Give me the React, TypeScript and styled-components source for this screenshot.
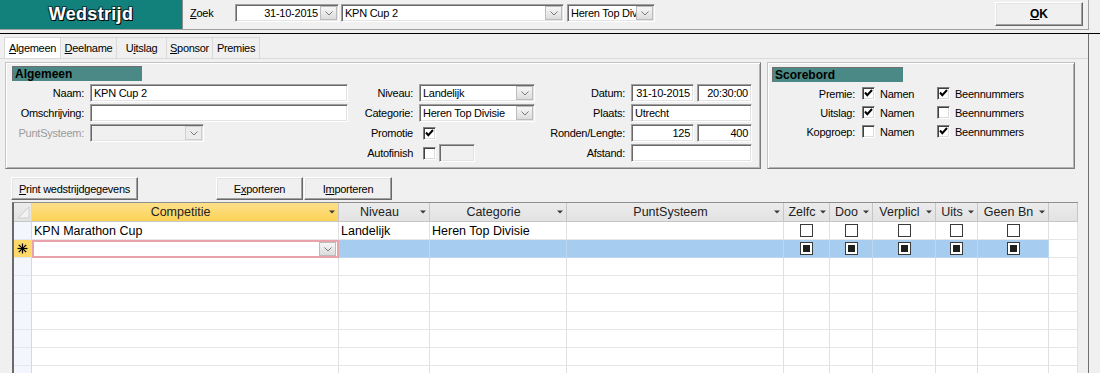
import React from 'react';
import styled, { createGlobalStyle, css } from 'styled-components';

const GlobalStyle = createGlobalStyle`
  html, body { margin: 0; padding: 0; background: #f0f0f0; }
  body {
    font-family: 'Liberation Sans', Arial, sans-serif;
    font-size: 11px;
    letter-spacing: -0.25px;
    color: #000;
    overflow: hidden;
  }
  * { box-sizing: border-box; }
`;

const sunken = css`
  border: 1px solid;
  border-color: #a0a0a0 #ffffff #ffffff #a0a0a0;
  box-shadow: inset 1px 1px 0 #696969, inset -1px -1px 0 #e3e3e3;
`;

const raised = css`
  border: 1px solid;
  border-color: #ffffff #696969 #696969 #ffffff;
  box-shadow: inset -1px -1px 0 #a0a0a0, inset 1px 1px 0 #e3e3e3;
  background: #f0f0f0;
`;

const Screen = styled.div`
  width: 1100px;
  height: 373px;
  overflow: hidden;
  display: flex;
  flex-direction: column;
`;

/* ---------- top bar ---------- */
const TopBar = styled.header`
  display: flex;
  align-items: flex-start;
  width: 1089px;
  height: 30px;
  flex-shrink: 0;
  border-right: 1px solid #a0a0a0;
  border-bottom: 1px solid #a0a0a0;
`;

const TitleBox = styled.div`
  width: 183px;
  height: 29px;
  background: #12807b;
  border-right: 1px solid #8c8c8c;
  display: flex;
  align-items: center;
  justify-content: center;
  color: #fff;
  font-size: 18px;
  font-weight: bold;
  letter-spacing: 0.3px;
  text-shadow: 1px 1px 0 #000, -1px -1px 0 #0b3f3c, 1px -1px 0 #0b3f3c, -1px 1px 0 #0b3f3c;
`;

const SearchGroup = styled.div`
  display: flex;
  align-items: center;
  height: 18px;
  margin-top: 4px;
  margin-left: 7px;
`;

const SearchLabel = styled.span`
  width: 45px;
`;

const Combo = styled.div<{ $w: number; $disabled?: boolean; $ml?: number }>`
  ${sunken};
  width: ${p => p.$w}px;
  height: 18px;
  margin-left: ${p => p.$ml ?? 0}px;
  flex-shrink: 0;
  display: flex;
  align-items: center;
  background: ${p => (p.$disabled ? '#f0f0f0' : '#fff')};
  overflow: hidden;
`;

const ComboText = styled.span<{ $align?: string }>`
  flex: 1;
  min-width: 0;
  padding: 0 2px 0 3px;
  white-space: nowrap;
  overflow: hidden;
  text-align: ${p => p.$align ?? 'left'};
`;

const DropBtn = styled.span<{ $disabled?: boolean }>`
  width: 17px;
  height: 14px;
  margin-right: 1px;
  flex-shrink: 0;
  border: 1px solid ${p => (p.$disabled ? '#d0d0d0' : '#bcbcbc')};
  background: ${p => (p.$disabled ? '#ececec' : 'linear-gradient(#f6f6f6, #dcdcdc)')};
  display: flex;
  align-items: center;
  justify-content: center;
`;

const OkButton = styled.button`
  ${raised};
  margin-left: auto;
  margin-right: 5px;
  margin-top: 2px;
  width: 88px;
  height: 24px;
  font-family: inherit;
  font-size: 12px;
  font-weight: bold;
  padding: 0;
  color: #000;
`;

const Divider = styled.div`
  width: 1100px;
  margin-top: 3px;
  border-top: 1px solid #000;
  flex-shrink: 0;
`;

/* ---------- tab page ---------- */
const Page = styled.main`
  flex: 1;
  width: 1089px;
  border-right: 1px solid #6f6f6f;
  display: flex;
  flex-direction: column;
  min-height: 0;
`;

const TabStrip = styled.nav`
  display: flex;
  margin-top: 3px;
  height: 22px;
  padding-left: 4px;
  border-bottom: 1px solid #d9d9d9;
  flex-shrink: 0;
`;

const Tab = styled.div<{ $w: number; $active?: boolean }>`
  width: ${p => p.$w}px;
  height: 21px;
  margin-right: -1px;
  border: 1px solid #d9d9d9;
  border-bottom: none;
  background: ${p => (p.$active ? '#ffffff' : '#f0f0f0')};
  display: flex;
  align-items: center;
  justify-content: center;
  font-size: 11px;
  letter-spacing: -0.3px;
  white-space: nowrap;
`;

const Content = styled.section`
  flex: 1;
  display: flex;
  flex-direction: column;
  padding: 3px 0 0 5px;
  min-height: 0;
`;

const PanelsRow = styled.div`
  display: flex;
  gap: 6px;
  flex-shrink: 0;
`;

const Panel = styled.div<{ $w: number; $pad: string }>`
  width: ${p => p.$w}px;
  height: 107px;
  padding: ${p => p.$pad};
  border: 1px solid;
  border-color: #c4c4c4 #7c7c7c #7c7c7c #c4c4c4;
  box-shadow: inset 1px 1px 0 #fff, inset -1px -1px 0 #b4b4b4;
`;

const SectionHeading = styled.div<{ $w: number }>`
  width: ${p => p.$w}px;
  height: 15px;
  line-height: 15px;
  padding-left: 2px;
  background: #4b8986;
  border-top: 1px solid #6f6f6f;
  border-left: 1px solid #6f6f6f;
  font-size: 12px;
  font-weight: bold;
  letter-spacing: 0;
  color: #000;
`;

const Fields = styled.div`
  display: flex;
  margin-top: 3px;
`;

const Column = styled.div<{ $ml?: number }>`
  display: flex;
  flex-direction: column;
  gap: 2px;
  margin-left: ${p => p.$ml ?? 0}px;
`;

const FieldRow = styled.div`
  display: flex;
  align-items: center;
  height: 18px;
  gap: 6px;
`;

const Label = styled.span<{ $w: number; $muted?: boolean }>`
  width: ${p => p.$w}px;
  flex-shrink: 0;
  text-align: right;
  white-space: nowrap;
  color: ${p => (p.$muted ? '#9a9a9a' : '#000')};
`;

const TextBox = styled.div<{ $w: number; $align?: string; $disabled?: boolean; $ml?: number }>`
  ${sunken};
  width: ${p => p.$w}px;
  height: 18px;
  flex-shrink: 0;
  margin-left: ${p => p.$ml ?? 0}px;
  background: ${p => (p.$disabled ? '#f0f0f0' : '#fff')};
  padding: 0 3px;
  line-height: 16px;
  text-align: ${p => p.$align ?? 'left'};
  white-space: nowrap;
  overflow: hidden;
`;

const InputPair = styled.div`
  display: flex;
  gap: 3px;
`;

const CheckBoxBox = styled.span<{ $ml?: number }>`
  width: 13px;
  height: 13px;
  flex-shrink: 0;
  margin-left: ${p => p.$ml ?? 0}px;
  border: 1px solid;
  border-color: #808080 #ffffff #ffffff #808080;
  box-shadow: inset 1px 1px 0 #404040, inset -1px -1px 0 #dcdcdc;
  background: #fff;
  display: flex;
  align-items: center;
  justify-content: center;
`;

const ScoreRows = styled.div`
  display: flex;
  flex-direction: column;
  margin-top: 2px;
`;

const ScoreRow = styled.div`
  display: flex;
  align-items: center;
  height: 19px;
`;

const CheckItem = styled.span<{ $w?: number; $ml?: number }>`
  display: flex;
  align-items: center;
  gap: 5px;
  width: ${p => (p.$w ? `${p.$w}px` : 'auto')};
  margin-left: ${p => p.$ml ?? 0}px;
  white-space: nowrap;
`;

/* ---------- buttons ---------- */
const ButtonRow = styled.div`
  display: flex;
  margin-top: 8px;
  flex-shrink: 0;
`;

const ActionButton = styled.button<{ $w: number; $ml: number }>`
  ${raised};
  width: ${p => p.$w}px;
  height: 23px;
  margin-left: ${p => p.$ml}px;
  font-family: inherit;
  font-size: 11px;
  letter-spacing: -0.25px;
  color: #000;
  padding: 0;
  white-space: nowrap;
`;

/* ---------- datasheet ---------- */
const COLS = '18px 307px 91px 137px 217px 46px 43px 63px 42px 71px 1fr';

const Sheet = styled.div`
  margin-top: 2px;
  margin-left: 7px;
  width: 1066px;
  flex: 1;
  min-height: 0;
  overflow: hidden;
  background: #fff;
  border-top: 1px solid #8e8e8e;
  border-left: 2px solid #6a6a6a;
  font-size: 12.5px;
  letter-spacing: 0;
`;

const SheetRow = styled.div<{ $h: number }>`
  display: grid;
  grid-template-columns: ${COLS};
  height: ${p => p.$h}px;
`;

const HeadCell = styled.div<{ $active?: boolean }>`
  border-right: 1px solid #c6c6c6;
  border-bottom: 1px solid #c6c6c6;
  background: ${p => (p.$active ? 'linear-gradient(#fee08a, #fbd257)' : 'linear-gradient(#ececec, #e2e2e2)')};
  display: flex;
  align-items: center;
  padding: 0 3px 0 3px;
  overflow: hidden;
  color: #222;
`;

const HeadText = styled.span`
  flex: 1;
  min-width: 0;
  text-align: center;
  white-space: nowrap;
  overflow: hidden;
`;

const HeadArrow = styled.span`
  width: 9px;
  flex-shrink: 0;
  display: flex;
  justify-content: flex-end;
`;

const SelectorCell = styled.div<{ $tone: 'head' | 'new' | 'plain' }>`
  border-right: 1px solid #d2d8e4;
  border-bottom: 1px solid ${p => (p.$tone === 'head' ? '#c6c6c6' : '#e3e7ef')};
  background: ${p =>
    p.$tone === 'head' ? 'linear-gradient(#ececec, #e2e2e2)' : p.$tone === 'new' ? '#fcd96a' : '#f3f6fc'};
  display: flex;
  align-items: center;
  justify-content: center;
`;

const DataCell = styled.div<{ $tone?: 'plain' | 'sel'; $center?: boolean }>`
  border-right: 1px solid ${p => (p.$tone === 'sel' ? '#bcd8f1' : '#e0e0e0')};
  border-bottom: 1px solid ${p => (p.$tone === 'sel' ? '#bcd8f1' : '#e6e6e6')};
  background: ${p => (p.$tone === 'sel' ? '#a6cdf0' : '#fff')};
  display: flex;
  align-items: center;
  justify-content: ${p => (p.$center ? 'center' : 'flex-start')};
  padding: 0 2px;
  white-space: nowrap;
  overflow: hidden;
`;

const EditCell = styled.div`
  border: 2px solid #e9a3aa;
  background: #fff;
  display: flex;
  align-items: center;
  justify-content: flex-end;
  padding-right: 0;
`;

const GridCheck = styled.span`
  width: 13px;
  height: 13px;
  border: 1px solid #3a3a3a;
  background: #fff;
  display: flex;
  align-items: center;
  justify-content: center;
`;

const NullMark = styled.span`
  width: 7px;
  height: 7px;
  background: #1e1e1e;
`;

/* ---------- icons ---------- */
const Chevron = () => (
  <svg width="8" height="5" viewBox="0 0 8 5">
    <polyline points="0.5,0.5 4,4 7.5,0.5" fill="none" stroke="#7a7a7a" strokeWidth="1" />
  </svg>
);

const Tick = () => (
  <svg width="9" height="9" viewBox="0 0 9 9">
    <path d="M1 3.5 L3.3 6.2 L8 1" fill="none" stroke="#000" strokeWidth="2" />
  </svg>
);

const SortArrow = () => (
  <svg width="6" height="4" viewBox="0 0 6 4">
    <polygon points="0,0.5 6,0.5 3,3.5" fill="#3a3a3a" />
  </svg>
);

const CornerMark = () => (
  <svg width="14" height="14" viewBox="0 0 14 14">
    <polygon points="13,2 13,13 2,13" fill="#f2f2f2" stroke="#cfcfcf" strokeWidth="1" />
  </svg>
);

const NewRowStar = () => (
  <svg width="11" height="11" viewBox="0 0 11 11">
    <g stroke="#000" strokeWidth="1.2">
      <line x1="5.5" y1="0.5" x2="5.5" y2="10.5" />
      <line x1="0.5" y1="5.5" x2="10.5" y2="5.5" />
      <line x1="1.8" y1="1.8" x2="9.2" y2="9.2" />
      <line x1="9.2" y1="1.8" x2="1.8" y2="9.2" />
    </g>
  </svg>
);

const CheckBox = ({ checked, ml }: { checked?: boolean; ml?: number }) => (
  <CheckBoxBox $ml={ml}>{checked ? <Tick /> : null}</CheckBoxBox>
);

const ComboBox = ({
  w,
  text,
  align,
  disabled,
  ml,
}: {
  w: number;
  text: string;
  align?: string;
  disabled?: boolean;
  ml?: number;
}) => (
  <Combo $w={w} $disabled={disabled} $ml={ml}>
    <ComboText $align={align}>{text}</ComboText>
    <DropBtn $disabled={disabled}>
      <Chevron />
    </DropBtn>
  </Combo>
);

/* ---------- data ---------- */
const headers = [
  { t: 'Competitie', active: true },
  { t: 'Niveau' },
  { t: 'Categorie' },
  { t: 'PuntSysteem' },
  { t: 'Zelfc' },
  { t: 'Doo' },
  { t: 'Verplicl' },
  { t: 'Uits' },
  { t: 'Geen Bn' },
];

const scoreRows = [
  { label: 'Premie:', namen: true, been: true },
  { label: 'Uitslag:', namen: true, been: false },
  { label: 'Kopgroep:', namen: false, been: true },
];

const tabs = [
  { label: <><u>A</u>lgemeen</>, w: 57, active: true },
  { label: <><u>D</u>eelname</>, w: 57 },
  { label: <>U<u>i</u>tslag</>, w: 51 },
  { label: <><u>S</u>ponsor</>, w: 47 },
  { label: <>Premies</>, w: 48 },
];

export default function App() {
  const emptyRows = Array.from({ length: 7 });
  return (
    <>
      <GlobalStyle />
      <Screen>
        <TopBar>
          <TitleBox>Wedstrijd</TitleBox>
          <SearchGroup>
            <SearchLabel>
              <u>Z</u>oek
            </SearchLabel>
            <ComboBox w={104} text="31-10-2015" align="right" />
            <ComboBox w={223} text="KPN Cup 2" ml={2} />
            <ComboBox w={88} text="Heren Top Divisie" ml={3} />
          </SearchGroup>
          <OkButton>
            <u>O</u>K
          </OkButton>
        </TopBar>
        <Divider />
        <Page>
          <TabStrip>
            {tabs.map((t, i) => (
              <Tab key={i} $w={t.w} $active={t.active}>
                {t.label}
              </Tab>
            ))}
          </TabStrip>
          <Content>
            <PanelsRow>
              <Panel $w={756} $pad="3px 0 0 6px">
                <SectionHeading $w={130}>Algemeen</SectionHeading>
                <Fields>
                  <Column>
                    <FieldRow>
                      <Label $w={72}>Naam:</Label>
                      <TextBox $w={258}>KPN Cup 2</TextBox>
                    </FieldRow>
                    <FieldRow>
                      <Label $w={72}>Omschrijving:</Label>
                      <TextBox $w={258} />
                    </FieldRow>
                    <FieldRow>
                      <Label $w={72} $muted>
                        PuntSysteem:
                      </Label>
                      <ComboBox w={114} text="" disabled />
                    </FieldRow>
                  </Column>
                  <Column $ml={6}>
                    <FieldRow>
                      <Label $w={59}>Niveau:</Label>
                      <ComboBox w={116} text="Landelijk" />
                    </FieldRow>
                    <FieldRow>
                      <Label $w={59}>Categorie:</Label>
                      <ComboBox w={116} text="Heren Top Divisie" />
                    </FieldRow>
                    <FieldRow>
                      <Label $w={59}>Promotie</Label>
                      <CheckBox checked ml={4} />
                    </FieldRow>
                    <FieldRow>
                      <Label $w={59}>Autofinish</Label>
                      <CheckBox ml={4} />
                      <TextBox $w={36} $disabled $ml={-3} />
                    </FieldRow>
                  </Column>
                  <Column $ml={5}>
                    <FieldRow>
                      <Label $w={85}>Datum:</Label>
                      <InputPair>
                        <TextBox $w={63} $align="right">
                          31-10-2015
                        </TextBox>
                        <TextBox $w={55} $align="right">
                          20:30:00
                        </TextBox>
                      </InputPair>
                    </FieldRow>
                    <FieldRow>
                      <Label $w={85}>Plaats:</Label>
                      <TextBox $w={121}>Utrecht</TextBox>
                    </FieldRow>
                    <FieldRow>
                      <Label $w={85}>Ronden/Lengte:</Label>
                      <InputPair>
                        <TextBox $w={63} $align="right">
                          125
                        </TextBox>
                        <TextBox $w={55} $align="right">
                          400
                        </TextBox>
                      </InputPair>
                    </FieldRow>
                    <FieldRow>
                      <Label $w={85}>Afstand:</Label>
                      <TextBox $w={121} />
                    </FieldRow>
                  </Column>
                </Fields>
              </Panel>
              <Panel $w={308} $pad="4px 0 0 4px">
                <SectionHeading $w={131}>Scorebord</SectionHeading>
                <ScoreRows>
                  {scoreRows.map(r => (
                    <ScoreRow key={r.label}>
                      <Label $w={83}>{r.label}</Label>
                      <CheckItem $w={75} $ml={7}>
                        <CheckBox checked={r.namen} />
                        Namen
                      </CheckItem>
                      <CheckItem>
                        <CheckBox checked={r.been} />
                        Beennummers
                      </CheckItem>
                    </ScoreRow>
                  ))}
                </ScoreRows>
              </Panel>
            </PanelsRow>

            <ButtonRow>
              <ActionButton $w={127} $ml={6}>
                <u>P</u>rint wedstrijdgegevens
              </ActionButton>
              <ActionButton $w={87} $ml={78}>
                E<u>x</u>porteren
              </ActionButton>
              <ActionButton $w={88} $ml={1}>
                I<u>m</u>porteren
              </ActionButton>
            </ButtonRow>

            <Sheet>
              <SheetRow $h={19}>
                <SelectorCell $tone="head">
                  <CornerMark />
                </SelectorCell>
                {headers.map(h => (
                  <HeadCell key={h.t} $active={h.active}>
                    <HeadText>{h.t}</HeadText>
                    <HeadArrow>
                      <SortArrow />
                    </HeadArrow>
                  </HeadCell>
                ))}
                <HeadCell />
              </SheetRow>

              <SheetRow $h={18}>
                <SelectorCell $tone="plain" />
                <DataCell>KPN Marathon Cup</DataCell>
                <DataCell>Landelijk</DataCell>
                <DataCell>Heren Top Divisie</DataCell>
                <DataCell />
                {[0, 1, 2, 3, 4].map(i => (
                  <DataCell key={i} $center>
                    <GridCheck />
                  </DataCell>
                ))}
                <DataCell />
              </SheetRow>

              <SheetRow $h={18}>
                <SelectorCell $tone="new">
                  <NewRowStar />
                </SelectorCell>
                <EditCell>
                  <DropBtn>
                    <Chevron />
                  </DropBtn>
                </EditCell>
                <DataCell $tone="sel" />
                <DataCell $tone="sel" />
                <DataCell $tone="sel" />
                {[0, 1, 2, 3, 4].map(i => (
                  <DataCell key={i} $tone="sel" $center>
                    <GridCheck>
                      <NullMark />
                    </GridCheck>
                  </DataCell>
                ))}
                <DataCell />
              </SheetRow>

              {emptyRows.map((_, r) => (
                <SheetRow key={r} $h={18}>
                  <SelectorCell $tone="plain" />
                  {Array.from({ length: 10 }).map((__, c) => (
                    <DataCell key={c} />
                  ))}
                </SheetRow>
              ))}
            </Sheet>
          </Content>
        </Page>
      </Screen>
    </>
  );
}
